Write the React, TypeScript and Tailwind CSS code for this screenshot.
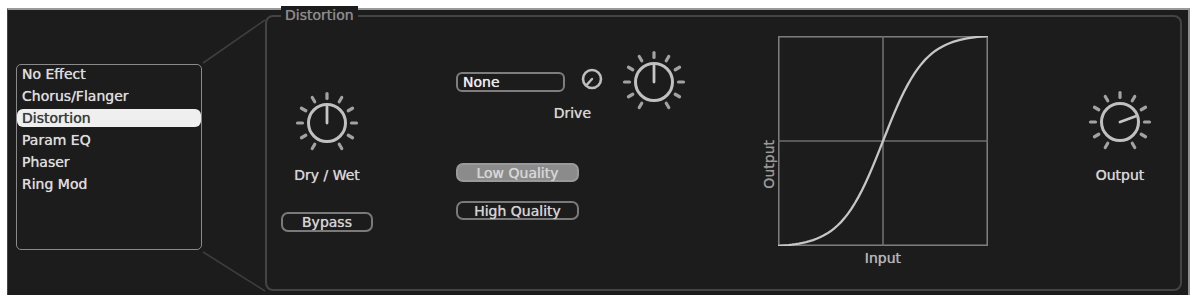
import type { ReactNode } from "react";

const effects = ["No Effect", "Chorus/Flanger", "Distortion", "Param EQ", "Phaser", "Ring Mod"];
const selected = "Distortion";

const tickAngles = [-150, -120, -90, -60, -30, 0, 30, 60, 90, 120, 150];

function polar(cx: number, cy: number, r: number, deg: number) {
  const a = (deg * Math.PI) / 180;
  return [cx + r * Math.sin(a), cy - r * Math.cos(a)];
}

function Knob({ angle }: { angle: number }) {
  const [px, py] = polar(34, 34, 16, angle);
  return (
    <svg width="68" height="68" viewBox="0 0 68 68" className="block">
      {tickAngles.map((t) => {
        const [x1, y1] = polar(34, 34, 24.5, t);
        const [x2, y2] = polar(34, 34, 29.5, t);
        return (
          <line key={t} x1={x1} y1={y1} x2={x2} y2={y2} stroke="#a2a2a2" strokeWidth="3.2" strokeLinecap="round" />
        );
      })}
      <circle cx="34" cy="34" r="18.5" fill="none" stroke="#c0c0c0" strokeWidth="3" />
      <line x1="34" y1="34" x2={px} y2={py} stroke="#c6c6c6" strokeWidth="2.8" strokeLinecap="round" />
    </svg>
  );
}

function SmallKnob() {
  const [px, py] = polar(12, 12, 7.5, 222);
  return (
    <svg width="24" height="24" viewBox="0 0 24 24" className="block">
      <circle cx="12" cy="12" r="9" fill="none" stroke="#bdbdbd" strokeWidth="2.6" />
      <line x1="12" y1="12" x2={px} y2={py} stroke="#bdbdbd" strokeWidth="2.4" strokeLinecap="round" />
    </svg>
  );
}

function curvePath() {
  const k = 5;
  const pts: string[] = [];
  for (let i = 0; i <= 60; i++) {
    const x = i / 60;
    const y = 0.5 + (0.5 * Math.tanh(k * (x - 0.5))) / Math.tanh(k / 2);
    pts.push(`${i === 0 ? "M" : "L"}${(x * 210).toFixed(1)},${(210 - y * 210).toFixed(1)}`);
  }
  return pts.join(" ");
}

function TransferGraph() {
  return (
    <svg width="210" height="210" viewBox="0 0 210 210" className="block">
      <rect x="0.75" y="0.75" width="208.5" height="208.5" fill="none" stroke="#7c7c7c" strokeWidth="1.6" />
      <line x1="105" y1="0" x2="105" y2="210" stroke="#6e6e6e" strokeWidth="1.6" />
      <line x1="0" y1="105" x2="210" y2="105" stroke="#6e6e6e" strokeWidth="1.6" />
      <path d={curvePath()} fill="none" stroke="#c6c6c6" strokeWidth="2.3" />
    </svg>
  );
}

function PillButton({ children, active, className }: { children: ReactNode; active?: boolean; className: string }) {
  return (
    <div
      className={`flex items-center justify-center rounded-[7px] border-2 text-[14px] leading-4 ${
        active ? "border-[#9a9a9a] bg-[#8b8b8b] text-[#d6d6d6]" : "border-[#7a7a7a] text-[#d2d2d2]"
      } ${className}`}
    >
      {children}
    </div>
  );
}

export default function App() {
  return (
    <div className="h-[295px] w-[1193px] overflow-hidden bg-white pl-[7px] pr-[3px] pt-[8px] font-['DejaVu_Sans',sans-serif] [text-shadow:0_0_0.7px_currentColor]">
      <div className="relative flex h-[300px] items-start border-l border-r-2 border-t-2 border-l-[#444] border-r-[#8c8c8c] border-t-[#9a9a9a] bg-[#1c1c1c]">
        {/* lines joining the list to the panel */}
        <svg width="260" height="290" className="pointer-events-none absolute left-0 top-0">
          <line x1="195" y1="53" x2="257" y2="10" stroke="#3e3e3e" strokeWidth="1.6" />
          <line x1="195" y1="242" x2="257" y2="281" stroke="#3e3e3e" strokeWidth="1.6" />
        </svg>

        <div className="w-[257px] shrink-0">
          <div className="ml-[8px] mt-[54px] h-[186px] w-[186px] rounded-[5px] border-[1.5px] border-[#8a8a8a]">
            <div className="flex flex-col gap-[4px]">
              {effects.map((name) => (
                <div
                  key={name}
                  className={`h-[18px] rounded-[6px] px-[5px] text-[14px] leading-[18px] ${
                    name === selected ? "bg-[#efefef] text-[#3c3c3c]" : "text-[#dcdcdc]"
                  }`}
                >
                  {name}
                </div>
              ))}
            </div>
          </div>
        </div>

        <div className="relative mt-[5px] mr-[6px] flex h-[276px] flex-1 items-start rounded-[8px] border-2 border-[#444]">
          <div className="absolute -top-[11px] left-[14px] bg-[#1c1c1c] px-[4px] text-[14px] leading-[18px] text-[#8a8a8a]">
            Distortion
          </div>

          {/* Dry / Wet */}
          <div className="ml-[14px] flex w-[92px] flex-col items-center">
            <div className="mt-[72px]">
              <Knob angle={0} />
            </div>
            <div className="mt-[10px] text-[14px] leading-4 text-[#d4d4d4]">Dry / Wet</div>
            <PillButton className="mt-[29px] h-[20px] w-[92px]">Bypass</PillButton>
          </div>

          {/* Drive */}
          <div className="ml-[83px] flex flex-col">
            <div className="mt-[31px] flex items-start">
              <div className="mt-[24px] flex flex-col">
                <div className="flex items-center">
                  <div className="flex h-[20px] w-[109px] items-center rounded-[6px] border-2 border-[#7e7e7e] pl-[5px] text-[14px] leading-4 text-[#ececec]">
                    None
                  </div>
                  <div className="ml-[15px] -mt-[6px]">
                    <SmallKnob />
                  </div>
                </div>
                <div className="mr-[13px] mt-[13px] self-end text-[14px] leading-4 text-[#d4d4d4]">Drive</div>
              </div>
              <div className="ml-[16px]">
                <Knob angle={0} />
              </div>
            </div>
            <PillButton active className="mt-[42px] h-[19px] w-[123px]">
              Low Quality
            </PillButton>
            <PillButton className="mt-[19px] h-[19px] w-[123px]">High Quality</PillButton>
          </div>

          {/* Transfer curve */}
          <div className="ml-[73px] mt-[19px] flex flex-col">
            <div className="flex items-start">
              <div className="mt-[104px] w-[16px] rotate-180 text-[14px] leading-4 text-[#9a9a9a] [writing-mode:vertical-rl]">
                Output
              </div>
              <div className="ml-[1px]">
                <TransferGraph />
              </div>
            </div>
            <div className="ml-[17px] mt-[4px] w-[210px] text-center text-[14px] leading-4 text-[#b4b4b4]">Input</div>
          </div>

          {/* Output */}
          <div className="ml-[98px] flex w-[68px] flex-col items-center">
            <div className="mt-[71px]">
              <Knob angle={70} />
            </div>
            <div className="mt-[11px] text-[14px] leading-4 text-[#d4d4d4]">Output</div>
          </div>
        </div>
      </div>
    </div>
  );
}
